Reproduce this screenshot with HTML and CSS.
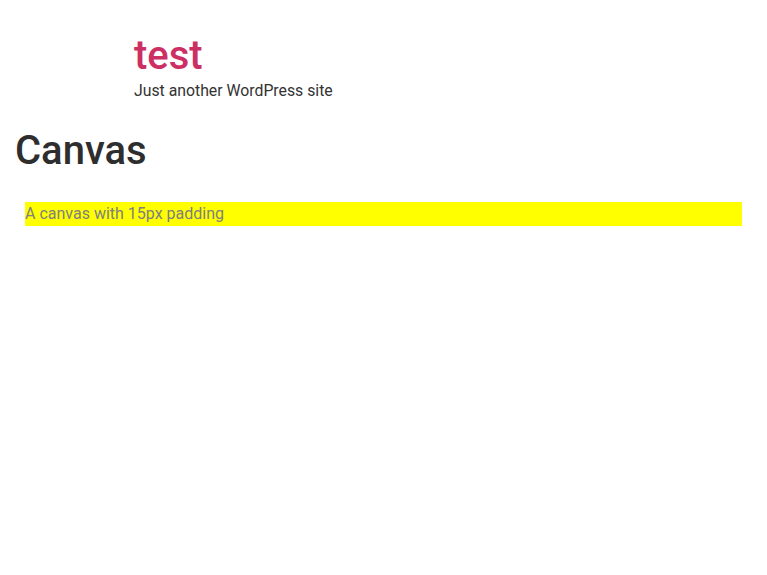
FILE: index.html
```html
<!DOCTYPE html>
<html>
<head>
<meta charset="utf-8">
<link rel="stylesheet" href="styles.css">
</head>
<body>
<header class="site-header">
  <div class="site-title">test</div>
  <div class="site-tagline">Just another WordPress site</div>
</header>
<main class="content">
  <h1 class="page-title">Canvas</h1>
  <div class="canvas">
    <p class="canvas-text">A canvas with 15px padding</p>
  </div>
</main>
</body>
</html>
```
FILE: styles.css
```css
html, body {
  margin: 0;
  padding: 0;
  background: #fff;
  font-family: Roboto, "Liberation Sans", sans-serif;
}
.site-header {
  padding: 33px 0 0 134px;
}
.site-title {
  font-size: 40px;
  line-height: 46px;
  color: #cc2f63;
  font-weight: 500;
}
.site-tagline {
  font-size: 15.8px;
  line-height: 20px;
  color: #333;
  margin-top: 2px;
}
.content {
  padding: 0 25px 0 15px;
}
.page-title {
  margin: 27px 0 0;
  font-size: 40px;
  line-height: 46px;
  font-weight: 500;
  color: #2e2e2e;
}
.canvas {
  margin: 28px 0 0 10px;
  background: #ff0;
  height: 24px;
}
.canvas-text {
  margin: 0;
  font-size: 16px;
  line-height: 24px;
  color: #808080;
}
```
